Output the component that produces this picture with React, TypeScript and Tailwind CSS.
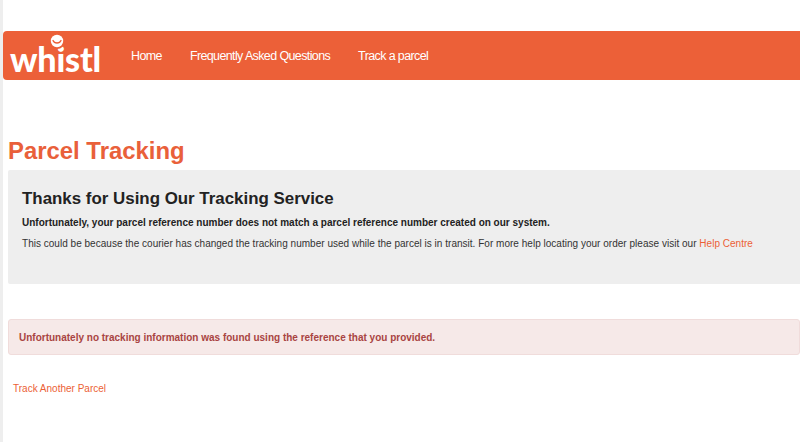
import React from 'react';

const navLinks = ['Home', 'Frequently Asked Questions', 'Track a parcel'];

function Logo() {
  return (
    <div className="relative w-[90px] h-[49px] shrink-0">
      <span className="block font-['Lato',sans-serif] font-black text-[34px] leading-[49px] tracking-[-0.2px] text-white pt-[3px]">
        whistl
      </span>
      {/* dot of the i with the smile */}
      <svg className="absolute left-[38px] top-[1px]" width="18" height="18" viewBox="0 0 18 18">
        <circle cx="9" cy="9" r="8" fill="#ec6038" />
        <circle cx="9" cy="9" r="6.2" fill="#fff" />
        <path d="M5 8.5C6.4 11.8 11.6 11.8 13 8.5" fill="none" stroke="#ec6038" strokeWidth="1.3" strokeLinecap="round" />
      </svg>
    </div>
  );
}

export default function App() {
  return (
    <div className="h-[442px] overflow-hidden bg-white font-['Liberation_Sans',Arial,sans-serif] border-l-[3px] border-[#eeeeee] pt-[31px]">
      <nav className="h-[49px] flex items-center bg-[#ec6038] rounded-l-[4px] pl-[7px]">
        <Logo />
        <ul className="flex gap-[28px] ml-[31px] mt-[2px] text-[12.5px] tracking-[-0.62px] text-white">
          {navLinks.map((link) => (
            <li key={link}>
              <a href="#">{link}</a>
            </li>
          ))}
        </ul>
      </nav>

      <div className="pl-[5px] pt-[57px]">
        <h1 className="text-[23.9px] leading-[28px] font-bold text-[#e9603a] mb-[5px]">Parcel Tracking</h1>

        <div className="h-[114px] bg-[#eeeeee] rounded-l-[2px] pl-[14px] pt-[19px] text-[#222222]">
          <h2 className="text-[16.9px] leading-[20px] font-bold">Thanks for Using Our Tracking Service</h2>
          <p className="mt-[7px] text-[10px] leading-[14px] font-bold">
            Unfortunately, your parcel reference number does not match a parcel reference number created on our system.
          </p>
          <p className="mt-[7px] text-[10px] leading-[14px] tracking-[0.02px] text-[#333333]">
            This could be because the courier has changed the tracking number used while the parcel is in transit. For more help locating your order please visit our{' '}
            <a href="#" className="text-[#ec5f36]">Help Centre</a>
          </p>
        </div>

        <div className="mt-[35px] h-[36px] flex items-center bg-[#f6e9e8] border border-[#f0dcdb] rounded-[3px] pl-[10px] text-[10px] font-bold text-[#a94442]">
          Unfortunately no tracking information was found using the reference that you provided.
        </div>

        <a href="#" className="block mt-[27px] ml-[5px] text-[10px] leading-[14px] text-[#ec5f36]">Track Another Parcel</a>
      </div>
    </div>
  );
}
